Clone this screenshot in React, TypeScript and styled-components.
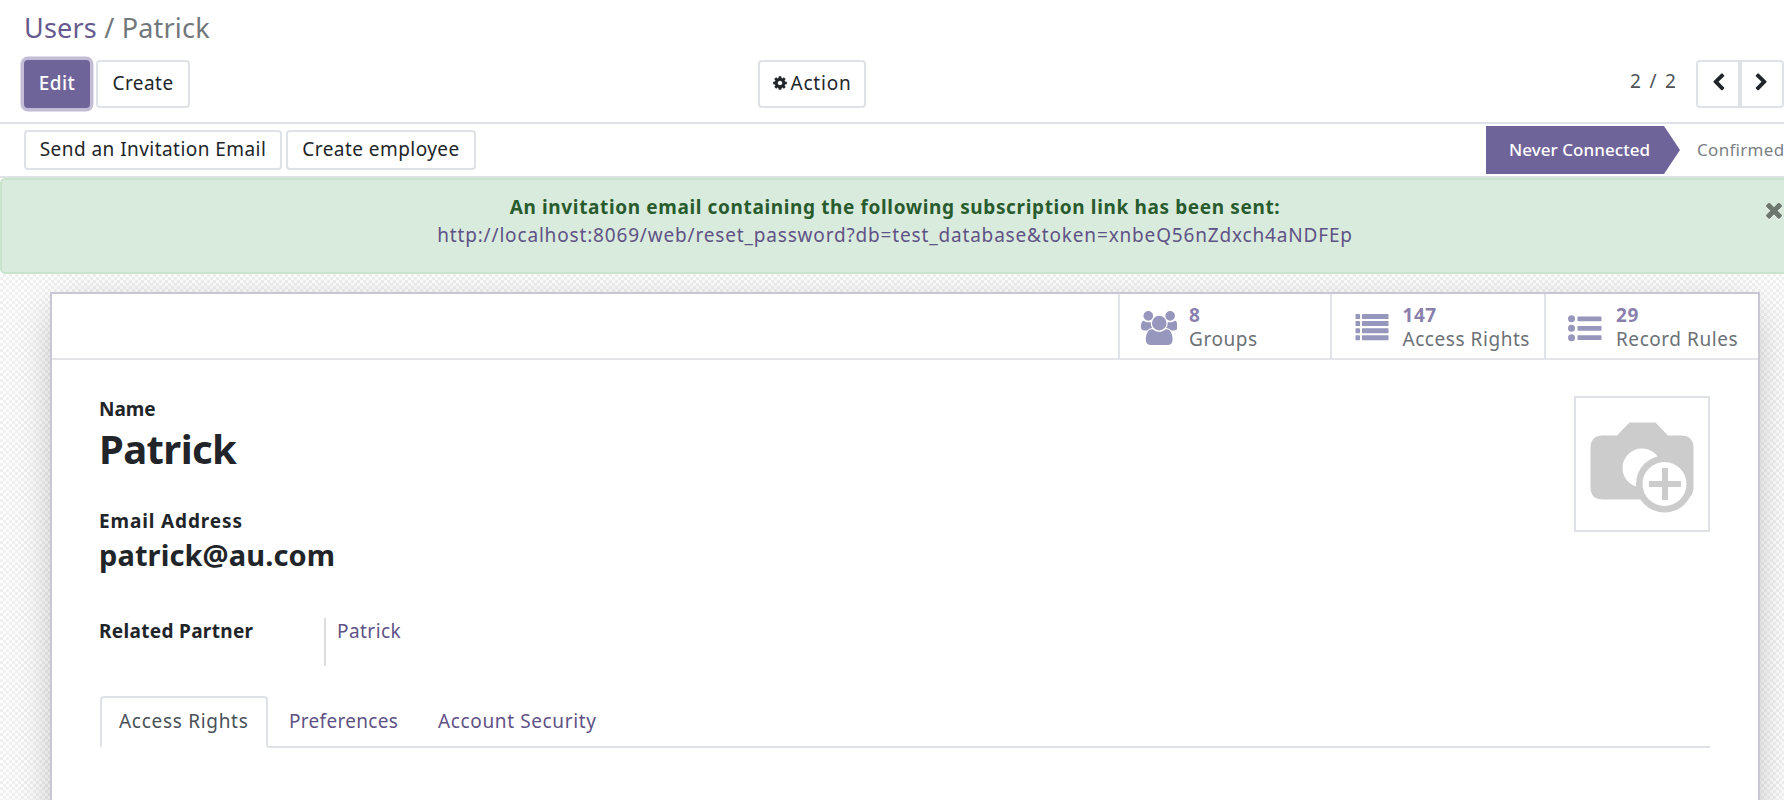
import React from 'react';
import styled, { createGlobalStyle, css } from 'styled-components';

const GlobalStyle = createGlobalStyle`
  * { box-sizing: border-box; }
  html, body { margin: 0; padding: 0; height: 100%; overflow: hidden; }
  body {
    font-family: 'Noto Sans', 'Open Sans', sans-serif;
    font-size: 19px;
    line-height: 28px;
    letter-spacing: 0.45px;
    color: #212529;
    background: #fff;
  }
  a { color: #5f5286; text-decoration: none; }
  button { font: inherit; letter-spacing: inherit; color: inherit; }
`;

const Page = styled.div`
  width: 1784px;
  height: 800px;
  display: flex;
  flex-direction: column;
  overflow: hidden;
`;

const ControlPanel = styled.header`
  height: 124px;
  flex: none;
  padding: 8px 0 0 24px;
  border-bottom: 2px solid #dee2e6;
`;

const Breadcrumb = styled.nav`
  height: 40px;
  line-height: 40px;
  font-size: 27px;
  letter-spacing: 0.2px;
  color: #72777b;
  a { color: #665a8f; }
`;

const ControlRow = styled.div`
  display: grid;
  grid-template-columns: 734px 1fr auto;
  margin-top: 12px;
  height: 48px;
`;

const ButtonGroup = styled.div<{ $gap?: number }>`
  display: flex;
  gap: ${(p) => p.$gap ?? 0}px;
`;

const Button = styled.button<{ $primary?: boolean; $w: number; $h?: number }>`
  display: flex;
  align-items: center;
  justify-content: center;
  gap: 3px;
  width: ${(p) => p.$w}px;
  height: ${(p) => p.$h ?? 48}px;
  padding: 0 0 3px;
  white-space: nowrap;
  background: #fff;
  border: 2px solid #dee2e6;
  border-radius: 4px;
  ${(p) =>
    p.$primary &&
    css`
      color: #fff;
      background: #6f6499;
      border-color: #6f6499;
      font-weight: 500;
      box-shadow: 0 0 0 3.5px #c2bcd6;
    `}
`;

const ActionButton = styled(Button)`
  padding-right: 1px;
  letter-spacing: 0.75px;
`;

const Pager = styled.div`
  display: flex;
  color: #4c5257;
  white-space: pre;
`;

const PagerCount = styled.span`
  line-height: 42px;
  margin-right: 19px;
  letter-spacing: 1px;
  word-spacing: 1.7px;
`;

const PagerButton = styled(Button)`
  &:first-of-type { border-radius: 4px 0 0 4px; }
  &:last-of-type { border-radius: 0 4px 4px 0; padding-right: 1px; }
  color: #212529;
`;

const StatusBar = styled.div`
  height: 54px;
  flex: none;
  display: flex;
  justify-content: space-between;
  align-items: center;
  padding-left: 24px;
  border-bottom: 2px solid #dee2e6;
`;

const Steps = styled.div`
  display: flex;
  width: 298px;
  height: 48px;
  line-height: 47px;
  font-size: 17px;
  letter-spacing: 0.3px;
  color: #7c8185;
  white-space: nowrap;
`;

const ActiveStep = styled.div`
  width: 194px;
  flex: none;
  padding-left: 23px;
  letter-spacing: 0.05px;
  color: #fff;
  font-weight: 500;
  background: #6f6499;
  clip-path: polygon(0 0, 178px 0, 100% 50%, 178px 100%, 0 100%);
`;

const Step = styled.div`
  padding-left: 17px;
`;

const Alert = styled.div`
  position: relative;
  width: 1792px;
  height: 96px;
  flex: none;
  padding: 13px 2px 0 0;
  text-align: center;
  letter-spacing: 0.83px;
  color: #285b2d;
  background: #d9ebdc;
  border: 2px solid #c9e4cd;
  border-radius: 5px;
`;

const AlertTitle = styled.div`
  font-weight: 700;
  letter-spacing: 0.63px;
`;

const CloseButton = styled.span`
  position: absolute;
  top: 18px;
  left: 1760px;
  display: flex;
  color: #6c776e;
  filter: drop-shadow(0 1px 0 #fff);
`;

const Backdrop = styled.main`
  flex: 1;
  min-height: 0;
  padding: 18px 24px 0 50px;
  background-color: #fff;
  background-image: conic-gradient(#f0f0f0 25%, #fdfdfd 0 50%, #f0f0f0 0 75%, #fdfdfd 0);
  background-size: 6px 6px;
`;

const Sheet = styled.section`
  height: 560px;
  background: #fff;
  border: 2px solid #c8c7d3;
  box-shadow: 0 10px 40px -10px rgba(0, 0, 0, 0.33);
`;

const StatBox = styled.div`
  display: flex;
  justify-content: flex-end;
  height: 66px;
  border-bottom: 2px solid #e3e5e9;
`;

const Stat = styled.div<{ $w: number; $inset?: number }>`
  display: flex;
  width: ${(p) => p.$w}px;
  padding-left: ${(p) => p.$inset ?? 21}px;
  border-left: 2px solid #e0e3e7;
  color: #6b7176;
  line-height: 24px;
  letter-spacing: 0.55px;
  white-space: nowrap;
`;

const StatIcon = styled.span<{ $top?: number }>`
  display: flex;
  width: 48px;
  padding-top: ${(p) => p.$top ?? 16}px;
  color: #9796bc;
`;

const StatText = styled.div`
  padding-top: 9px;
`;

const StatValue = styled.div`
  font-weight: 700;
  color: #8a80ae;
`;

const SheetBody = styled.div`
  padding: 35px 48px 0;
`;

const TopRow = styled.div`
  display: flex;
  justify-content: space-between;
`;

const Identity = styled.div`
  margin-left: -1px;
`;

const Label = styled.div<{ $track?: number }>`
  font-size: 19px;
  line-height: 28px;
  font-weight: 700;
  letter-spacing: ${(p) => p.$track ?? 0}px;
`;

const Name = styled.h1`
  margin: 0 0 32px;
  font-size: 40px;
  line-height: 52px;
  font-weight: 700;
  letter-spacing: -0.6px;
`;

const Login = styled.h2`
  margin: 0;
  font-size: 29px;
  line-height: 40px;
  font-weight: 700;
  letter-spacing: 0.1px;
`;

const Avatar = styled.div`
  width: 136px;
  height: 136px;
  margin-top: 1px;
  border: 2px solid #dee2e6;
`;

const Field = styled.div`
  display: flex;
  height: 48px;
  margin: 43px 0 0 -1px;
  line-height: 26px;
`;

const FieldLabel = styled(Label)`
  width: 227px;
  line-height: 26px;
  border-right: 2px solid #dcdddf;
`;

const FieldValue = styled.a`
  padding-left: 11px;
`;

const Tabs = styled.div`
  display: flex;
  height: 52px;
  margin-top: 30px;
  line-height: 46px;
  border-bottom: 2px solid #dee2e6;
`;

const Tab = styled.a<{ $active?: boolean; $w: number; $track?: number }>`
  width: ${(p) => p.$w}px;
  height: 52px;
  padding-left: 19px;
  white-space: nowrap;
  letter-spacing: ${(p) => p.$track ?? 0.4}px;
  border: 2px solid transparent;
  ${(p) =>
    p.$active &&
    css`
      padding-left: 17px;
      color: #495057;
      background: #fff;
      border-color: #dee2e6 #dee2e6 #fff;
      border-radius: 4px 4px 0 0;
    `}
`;

const PATHS = {
  cog: 'M1152 896q0-106-75-181t-181-75-181 75-75 181 75 181 181 75 181-75 75-181zm512-109v222q0 12-8 23t-20 13l-185 28q-19 54-39 91 35 50 107 138 10 12 10 25t-9 23q-27 37-99 108t-94 71q-12 0-26-9l-138-108q-44 23-91 38-16 136-29 186-7 28-36 28h-222q-14 0-24.5-8.5t-11.5-21.5l-28-184q-49-16-90-37l-141 107q-10 9-25 9-14 0-25-11-126-114-165-168-7-10-7-23 0-12 8-23 15-21 51-66.5t54-70.5q-27-50-41-99l-183-27q-13-2-21-12.5t-8-23.5v-222q0-12 8-23t19-13l186-28q14-46 39-92-40-57-107-138-10-12-10-24 0-10 9-23 26-36 98.5-107.5t94.5-71.5q13 0 26 10l138 107q44-23 91-38 16-136 29-186 7-28 36-28h222q14 0 24.5 8.5t11.5 21.5l28 184q49 16 90 37l142-107q9-9 24-9 13 0 25 10 129 119 165 170 7 8 7 22 0 12-8 23-15 21-51 66.5t-54 70.5q26 50 41 98l183 28q13 2 21 12.5t8 23.5z',
  left: 'M1427 301l-531 531 531 531q19 19 19 45t-19 45l-166 166q-19 19-45 19t-45-19l-742-742q-19-19-19-45t19-45l742-742q19-19 45-19t45 19l166 166q19 19 19 45t-19 45z',
  right: 'M1363 877l-742 742q-19 19-45 19t-45-19l-166-166q-19-19-19-45t19-45l531-531-531-531q-19-19-19-45t19-45l166-166q19-19 45-19t45 19l742 742q19 19 19 45t-19 45z',
  times: 'M1490 1322q0 40-28 68l-136 136q-28 28-68 28t-68-28l-294-294-294 294q-28 28-68 28t-68-28l-136-136q-28-28-28-68t28-68l294-294-294-294q-28-28-28-68t28-68l136-136q28-28 68-28t68 28l294 294 294-294q28-28 68-28t68 28l136 136q28 28 28 68t-28 68l-294 294 294 294q28 28 28 68z',
  users: 'M593 896q-162 5-265 128h-134q-82 0-138-40.5t-56-118.5q0-353 124-353 6 0 43.5 21t97.5 42.5 119 21.5q67 0 133-23-5 37-5 66 0 139 81 256zm1071 637q0 120-73 189.5t-194 69.5h-874q-121 0-194-69.5t-73-189.5q0-53 3.5-103.5t14-109 26.5-108.5 43-97.5 62-81 85.5-53.5 111.5-20q10 0 43 21.5t73 48 107 48 135 21.5 135-21.5 107-48 73-48 43-21.5q61 0 111.5 20t85.5 53.5 62 81 43 97.5 26.5 108.5 14 109 3.5 103.5zm-1024-1277q0 106-75 181t-181 75-181-75-75-181 75-181 181-75 181 75 75 181zm704 384q0 159-112.5 271.5t-271.5 112.5-271.5-112.5-112.5-271.5 112.5-271.5 271.5-112.5 271.5 112.5 112.5 271.5zm576 225q0 78-56 118.5t-138 40.5h-134q-103-123-265-128 81-117 81-256 0-29-5-66 66 23 133 23 59 0 119-21.5t97.5-42.5 43.5-21q124 0 124 353zm-128-609q0 106-75 181t-181 75-181-75-75-181 75-181 181-75 181 75 75 181z',
};

function Icon({ name, size, box = 1792 }: { name: keyof typeof PATHS; size: number; box?: number }) {
  return (
    <svg width={(size * box) / 1792} height={size} viewBox={`0 0 ${box} 1792`} fill="currentColor">
      <path d={PATHS[name]} />
    </svg>
  );
}

function ListIcon() {
  return (
    <svg width="34" height="34" viewBox="0 0 34 34" fill="currentColor">
      {[4, 11, 18.2, 25.3].map((y) => (
        <g key={y}>
          <rect x="0.5" y={y} width="4.5" height="5" rx="0.6" />
          <rect x="7" y={y} width="26.5" height="5" rx="0.6" />
        </g>
      ))}
    </svg>
  );
}

function BulletListIcon() {
  return (
    <svg width="34" height="34" viewBox="0 0 34 34" fill="currentColor">
      {[8.8, 18.3, 27.7].map((y) => (
        <g key={y}>
          <circle cx="3.5" cy={y} r="3.5" />
          <rect x="9.5" y={y - 2.4} width="24" height="4.8" rx="0.6" />
        </g>
      ))}
    </svg>
  );
}

function CameraPlaceholder() {
  return (
    <svg width="132" height="132" viewBox="0 0 132 132">
      <path
        d="M27 37.5H41L53.5 24.5H79.5L92 37.5H105Q117.500 37.500 117.500 50V89Q117.500 101.500 105 101.500H27Q14.500 101.500 14.500 89V50Q14.500 37.500 27 37.500Z"
        fill="#ccc"
      />
      <circle cx="66" cy="70" r="19.500" fill="#fff" />
      <circle cx="88.500" cy="86" r="28.500" fill="#ccc" />
      <circle cx="88.500" cy="86" r="22" fill="#fff" />
      <path d="M86 70H92V83H105V89H92V102H86V89H73V83H86Z" fill="#ccc" />
    </svg>
  );
}

export default function App() {
  return (
    <Page>
      <GlobalStyle />
      <ControlPanel>
        <Breadcrumb>
          <a href="#users">Users</a> / Patrick
        </Breadcrumb>
        <ControlRow>
          <ButtonGroup $gap={6}>
            <Button $primary $w={66}>Edit</Button>
            <Button $w={94}>Create</Button>
          </ButtonGroup>
          <ButtonGroup>
            <ActionButton $w={108}>
              <Icon name="cog" size={16} />
              Action
            </ActionButton>
          </ButtonGroup>
          <Pager>
            <PagerCount>2 / 2</PagerCount>
            <PagerButton $w={44}>
              <Icon name="left" size={19} />
            </PagerButton>
            <PagerButton $w={44}>
              <Icon name="right" size={19} />
            </PagerButton>
          </Pager>
        </ControlRow>
      </ControlPanel>

      <StatusBar>
        <ButtonGroup $gap={4}>
          <Button $w={258} $h={40}>Send an Invitation Email</Button>
          <Button $w={190} $h={40}>Create employee</Button>
        </ButtonGroup>
        <Steps>
          <ActiveStep>Never Connected</ActiveStep>
          <Step>Confirmed</Step>
        </Steps>
      </StatusBar>

      <Alert>
        <AlertTitle>An invitation email containing the following subscription link has been sent:</AlertTitle>
        <a href="#reset">http://localhost:8069/web/reset_password?db=test_database&amp;token=xnbeQ56nZdxch4aNDFEp</a>
        <CloseButton>
          <Icon name="times" size={24} />
        </CloseButton>
      </Alert>

      <Backdrop>
        <Sheet>
          <StatBox>
            <Stat $w={212}>
              <StatIcon $top={17}><Icon name="users" size={34} box={1920} /></StatIcon>
              <StatText>
                <StatValue>8</StatValue>
                Groups
              </StatText>
            </Stat>
            <Stat $w={214} $inset={22.5}>
              <StatIcon><ListIcon /></StatIcon>
              <StatText>
                <StatValue>147</StatValue>
                Access Rights
              </StatText>
            </Stat>
            <Stat $w={214} $inset={22}>
              <StatIcon><BulletListIcon /></StatIcon>
              <StatText>
                <StatValue>29</StatValue>
                Record Rules
              </StatText>
            </Stat>
          </StatBox>

          <SheetBody>
            <TopRow>
              <Identity>
                <Label>Name</Label>
                <Name>Patrick</Name>
                <Label $track={0.87}>Email Address</Label>
                <Login>patrick@au.com</Login>
              </Identity>
              <Avatar>
                <CameraPlaceholder />
              </Avatar>
            </TopRow>
            <Field>
              <FieldLabel $track={0.33}>Related Partner</FieldLabel>
              <FieldValue href="#partner">Patrick</FieldValue>
            </Field>
            <Tabs>
              <Tab $active $w={168} $track={0.7} href="#access">Access Rights</Tab>
              <Tab $w={149} $track={0.3} href="#preferences">Preferences</Tab>
              <Tab $w={200} $track={0.63} href="#security">Account Security</Tab>
            </Tabs>
          </SheetBody>
        </Sheet>
      </Backdrop>
    </Page>
  );
}
